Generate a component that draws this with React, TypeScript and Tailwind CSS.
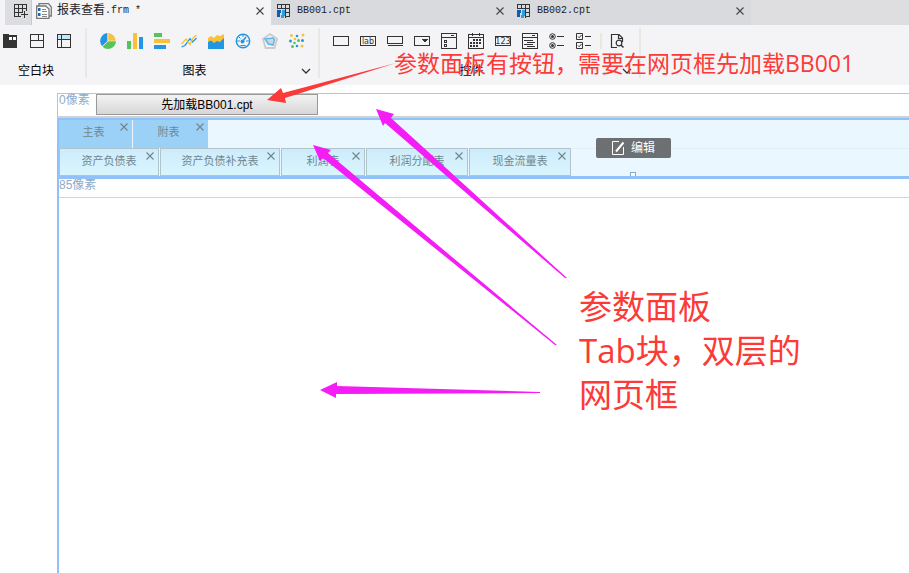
import type { ReactNode } from "react";

const CJK = "font-['Liberation_Sans','Noto_Sans_CJK_SC',sans-serif]";
const INK = "#333333";
const BLUE = "#2196e3";
const GREEN = "#54c558";
const YELLOW = "#f9c138";

function Icon({ children, crisp = true }: { children: ReactNode; crisp?: boolean }) {
  return (
    <svg
      viewBox="0 0 16 16"
      className="block size-4"
      fill="none"
      stroke={INK}
      shapeRendering={crisp ? "crispEdges" : "auto"}
      aria-hidden="true"
    >
      {children}
    </svg>
  );
}

const blockTools = [
  {
    name: "Tab块",
    icon: (
      <Icon>
        <path d="M0 3h5l1 1h8v13H0z" transform="translate(0 -2)" fill={INK} stroke="none" />
        <path d="M6 4h3v3H6zM10 4h3v3h-3z" fill="#fff" stroke="none" />
        <path d="M0 13h14v2H0z" fill={INK} stroke="none" />
      </Icon>
    ),
  },
  {
    name: "绝对画布块",
    icon: (
      <Icon>
        <path d="M.5 1.5h13v13H.5zM.5 7.5h13M8.500 1.500v6" />
      </Icon>
    ),
  },
  {
    name: "报表块",
    icon: (
      <Icon>
        <path d="M1 2h12v4H1z" fill="#bfe9f8" stroke="none" />
        <path d="M.5 1.5h13v13H.5zM.5 6.500h13M4.500 1.500v13" />
      </Icon>
    ),
  },
];

const chartTools = [
  {
    name: "饼图",
    icon: (
      <Icon crisp={false}>
        <g stroke="none">
          <path d="M8 8V0a8 8 0 0 1 7.500 9z" fill={YELLOW} />
          <path d="M8 8h8a8 8 0 0 1-13.500 5.700z" fill={GREEN} />
          <path d="M7.500 8L2.200 13.300A8 8 0 0 1 7.500.1z" fill={BLUE} />
        </g>
        <path d="M8 0v8h8M8 8l-6 6" stroke="#f4f4f7" strokeWidth=".6" />
      </Icon>
    ),
  },
  {
    name: "柱形图",
    icon: (
      <Icon>
        <path d="M0 8h4v8H0z" fill={GREEN} stroke="none" />
        <path d="M6 0h4v16H6z" fill={YELLOW} stroke="none" />
        <path d="M12 4h4v12h-4z" fill={BLUE} stroke="none" />
      </Icon>
    ),
  },
  {
    name: "条形图",
    icon: (
      <Icon>
        <path d="M0 0h8v4H0z" fill={GREEN} stroke="none" />
        <path d="M0 6h16v4H0z" fill={YELLOW} stroke="none" />
        <path d="M0 12h12v4H0z" fill={BLUE} stroke="none" />
      </Icon>
    ),
  },
  {
    name: "折线图",
    icon: (
      <Icon crisp={false}>
        <path d="M.5 14l3.500-1.500 5-7 2.500 3.500L15.500 5" stroke={BLUE} strokeWidth="1.300" />
        <path d="M.5 11L5 6l4 5.500 3-6.500 3.500-3" stroke={YELLOW} strokeWidth="1.300" />
      </Icon>
    ),
  },
  {
    name: "面积图",
    icon: (
      <Icon crisp={false}>
        <path d="M0 5l3-2 3 2 3-3 3 1 4-2v9H0z" fill={YELLOW} stroke="none" />
        <path d="M0 9l3-1.500L6 10l3-2 3 1 4-4v11H0z" fill={BLUE} stroke="none" />
      </Icon>
    ),
  },
  {
    name: "仪表盘",
    icon: (
      <Icon crisp={false}>
        <circle cx="8" cy="8" r="6.700" stroke={BLUE} strokeWidth="1.400" />
        <path d="M2 8h3M11 8h3M8 2v2M4 4l1.500 1.500M5.500 12.500h5" stroke={BLUE} />
        <circle cx="7.500" cy="8.500" r="2" fill={BLUE} stroke="none" />
        <path d="M7.500 8.500L11 4" stroke={BLUE} strokeWidth="1.500" />
      </Icon>
    ),
  },
  {
    name: "雷达图",
    icon: (
      <Icon crisp={false}>
        <path d="M8 1l7 5-2.500 9h-9L1 6z" stroke="#cccccc" strokeWidth="1.800" />
        <path d="M8 4.500l4 3-1.500 4h-5L4 7.500z" fill="#d2d4d6" stroke="none" />
        <path d="M3 6l8-1 1.500 2-1.500 5-4.500-1z" stroke="#5ab7ed" strokeWidth="1.500" />
      </Icon>
    ),
  },
  {
    name: "散点图",
    icon: (
      <Icon crisp={false}>
        <g stroke="none">
          <g fill={YELLOW}>
            <circle cx="2.500" cy="2.500" r="1.500" />
            <circle cx="14" cy="2" r="1.500" />
            <circle cx="6" cy="6" r="1.300" />
            <circle cx="13" cy="13" r="1.500" />
          </g>
          <g fill={BLUE}>
            <circle cx="8" cy="3" r="1.300" />
            <circle cx="1.500" cy="8" r="1.500" />
            <circle cx="13.500" cy="7.500" r="1.500" />
            <circle cx="8" cy="13" r="1.300" />
          </g>
          <g fill={GREEN}>
            <circle cx="9.500" cy="7.500" r="1.500" />
            <circle cx="5.500" cy="10" r="1.300" />
            <circle cx="3.500" cy="13.500" r="1.500" />
          </g>
        </g>
      </Icon>
    ),
  },
];

const widgetTools = [
  {
    name: "文本框",
    icon: (
      <Icon>
        <path d="M.5 3.500h15v9H.5z" />
      </Icon>
    ),
  },
  {
    name: "标签",
    icon: (
      <Icon>
        <path d="M.5 3.500h15v9H.5z" />
        <text x="8" y="11" textAnchor="middle" fontSize="8" fill={INK} stroke="none" className="font-['DejaVu_Sans',sans-serif]">
          lab
        </text>
      </Icon>
    ),
  },
  {
    name: "按钮",
    icon: (
      <Icon>
        <path d="M.5 3.500h15v7H.5zM1 12.500h15" />
      </Icon>
    ),
  },
  {
    name: "下拉框",
    icon: (
      <Icon>
        <path d="M.5 3.500h15v9H.5z" />
        <path d="M8 6h6l-3 4z" fill={INK} stroke="none" />
      </Icon>
    ),
  },
  {
    name: "下拉复选框",
    icon: (
      <Icon>
        <path d="M.5.5h15v15H.5zM.5 4.500h15M3.500 7.500h2v2h-2zM3.500 11.500h2v2h-2zM10 2.500h3" />
      </Icon>
    ),
  },
  {
    name: "日期",
    icon: (
      <Icon>
        <path d="M.5 1.500h15v14H.5zM.5 4.500h15M4.500 0v3M11.500 0v3" />
        <path d="M5 7h8M2 10h11M2 13h8" strokeWidth="2" strokeDasharray="2 1" />
      </Icon>
    ),
  },
  {
    name: "数字",
    icon: (
      <Icon>
        <path d="M1.500 3.500H.5v9h1M14.500 3.500h1v9h-1M1 3.500h14M1 12.500h14" />
        <text x="8" y="11" textAnchor="middle" fontSize="8" fill={INK} stroke="none" className="font-['DejaVu_Sans',sans-serif]">
          123
        </text>
      </Icon>
    ),
  },
  {
    name: "文本域",
    icon: (
      <Icon>
        <path d="M.5.5h15v15H.5zM.5 4.500h15M10 2.500h3M2 7.500h9M5 9.500h8M2 11.500h9M5 13.500h8" />
      </Icon>
    ),
  },
  {
    name: "单选按钮组",
    icon: (
      <Icon crisp={false}>
        <circle cx="3.500" cy="3.500" r="2.800" />
        <circle cx="3.500" cy="12.500" r="2.800" />
        <circle cx="3.500" cy="3.500" r="1.500" fill={INK} stroke="none" />
        <circle cx="3.500" cy="12.500" r="1.500" fill={INK} stroke="none" />
        <path d="M8 3.500h7M8 12.500h7" />
      </Icon>
    ),
  },
  {
    name: "复选按钮组",
    icon: (
      <Icon crisp={false}>
        <path d="M.5.5h6v6h-6zM.5 9.500h6v6h-6zM9 3.500h6M9 12.500h6M2 3.500l1.200 1.200L5.500 2M2 12.500l1.200 1.200L5.500 11" />
      </Icon>
    ),
  },
];

function ToolRow({ tools }: { tools: { name: string; icon: ReactNode }[] }) {
  return (
    <div className="flex gap-[11px]">
      {tools.map((tool) => (
        <button key={tool.name} type="button" aria-label={tool.name} className="block size-4">
          {tool.icon}
        </button>
      ))}
    </div>
  );
}

function GroupLabel({ text, more = false }: { text: string; more?: boolean }) {
  return (
    <div className="relative text-center text-xs leading-4 text-black">
      {text}
      {more && (
        <button type="button" aria-label={`更多${text}`} className="absolute top-1 right-[7px]">
          <svg width="10" height="8" viewBox="0 0 10 8" fill="none" stroke={INK} strokeWidth="1.300" className="block" aria-hidden="true">
            <path d="M1 2l4 4 4-4" />
          </svg>
        </button>
      )}
    </div>
  );
}

function Cross({ color }: { color: string }) {
  return (
    <svg width="8" height="8" viewBox="0 0 8 8" fill="none" stroke={color} strokeWidth="1.100" className="block" aria-hidden="true">
      <path d="M.5.5l7 7M7.500.5l-7 7" />
    </svg>
  );
}

function FormFileIcon() {
  return (
    <svg width="16" height="16" viewBox="0 0 16 16" fill="none" stroke="#777" className="block shrink-0" aria-hidden="true">
      <path d="M3 3V.7h9.500L15.300 4v9H13" strokeWidth="1.300" />
      <path d="M.7 3h9L13 6v9.300H.7z" fill="#fff" strokeWidth="1.300" />
      <path d="M2 5h2.500v3H2zM2 10h2.500v3H2z" fill="#1769b5" stroke="none" />
      <path d="M6 6.500h4M6 8.500h5M6 11.500h5M6 13.500h5" stroke="#888" />
    </svg>
  );
}

function ReportFileIcon() {
  return (
    <svg width="14" height="14" viewBox="0 0 14 14" fill="none" stroke={INK} className="block shrink-0" shapeRendering="crispEdges" aria-hidden="true">
      <path d="M.5 5V.5h12v12H8M.5 4.500h12M4.500.5v4M8.500.5v13M8 8.500h5" />
      <path d="M0 6h4v3H3v4H0z" fill="#0f5dad" stroke="none" />
      <path d="M5 6h3v6H7v2H4v-3h1z" fill="#2a9fe2" stroke="none" />
    </svg>
  );
}

function FileTab({ name, ext, active = false, icon }: { name: string; ext: string; active?: boolean; icon: ReactNode }) {
  return (
    <div
      className={
        active
          ? "flex h-full w-[239px] shrink-0 items-center bg-[#f4f4f7] pr-[7px] pb-1 pl-1 text-[#222]"
          : "flex h-full w-60 shrink-0 items-center bg-[#d9dade] pr-[7px] pb-1 pl-1.5 text-[#222]"
      }
    >
      <button type="button" className={active ? "flex flex-1 items-center gap-[5px]" : "flex flex-1 items-center gap-1.5"}>
        {icon}
        <span className="flex items-center font-['Liberation_Mono','Noto_Sans_CJK_SC',monospace] text-[10px] leading-4 whitespace-pre">
          {active && <span className="text-xs leading-4">{name}</span>}
          <span>{active ? ext : name + ext}</span>
        </span>
      </button>
      <button type="button" aria-label={`关闭${name}`}>
        <Cross color="#444" />
      </button>
    </div>
  );
}

function PageTab({ label, width, lower = false }: { label: string; width: string; lower?: boolean }) {
  return (
    <div
      className={`relative flex h-7 items-center justify-center text-[11px] leading-4 text-[#6f8791] ${width} ${
        lower ? "border border-[#b0c4cb] bg-linear-to-b from-[#cdebfa] to-[#d9f6fe]" : "bg-[#9bd1f6]"
      }`}
    >
      <button type="button" className={lower ? "pb-0.5" : "pr-1 pb-1"}>
        {label}
      </button>
      <button type="button" aria-label={`关闭${label}`} className="absolute top-[3px] right-1">
        <Cross color="#71848d" />
      </button>
    </div>
  );
}

const sheets = [
  { label: "资产负债表", width: "w-[100px]" },
  { label: "资产负债补充表", width: "w-[120px]" },
  { label: "利润表", width: "w-[84px]" },
  { label: "利润分配表", width: "w-[102px]" },
  { label: "现金流量表", width: "w-[102px]" },
];

export default function App() {
  return (
    <div className={`relative flex min-h-screen flex-col overflow-hidden bg-white ${CJK}`}>
      <header>
        <nav className="flex h-[25px] bg-[#dedee0]" aria-label="文件">
          <div className="w-[5px] shrink-0 bg-[#f4f4f7]" />
          <button
            type="button"
            aria-label="新建"
            className="flex w-[27px] shrink-0 items-center justify-center border-r border-[#c8c9cc] bg-[#dcdde0] pb-1 pl-1.5"
          >
            <svg width="14" height="14" viewBox="0 0 14 14" fill="none" stroke={INK} shapeRendering="crispEdges" aria-hidden="true">
              <path d="M7 12.500H.5V.5h12V7M.5 4.500h12M.5 8.500H8M4.500.5v12M8.500.5v8M10.500 7v7M7 10.500h7" />
            </svg>
          </button>
          <FileTab active name="报表查看" ext=".frm *" icon={<FormFileIcon />} />
          <FileTab name="BB001" ext=".cpt" icon={<ReportFileIcon />} />
          <FileTab name="BB002" ext=".cpt" icon={<ReportFileIcon />} />
        </nav>

        <div className="flex h-[60px] bg-[#f4f4f7] pt-[3px] pb-[7px]">
          <section className="flex w-[87px] flex-col gap-3.5 border-r-2 border-[#e8e8e4] pt-[5px] pl-[3px]">
            <ToolRow tools={blockTools} />
            <div className="pr-4">
              <GroupLabel text="空白块" />
            </div>
          </section>
          <section className="flex w-[233px] flex-col gap-3.5 border-r-2 border-[#e8e8e4] pt-[5px]">
            <div className="pl-[13px]">
              <ToolRow tools={chartTools} />
            </div>
            <div className="-ml-4">
              <GroupLabel text="图表" more />
            </div>
          </section>
          <section className="flex w-[321px] flex-col gap-3.5 border-r-2 border-[#e8e8e4] pt-[5px]">
            <div className="flex pl-[13px]">
              <ToolRow tools={widgetTools} />
              <div className="ml-2 h-4 w-0.5 bg-[#e8e8df]" />
              <button type="button" aria-label="查询" className="ml-2">
                <Icon crisp={false}>
                  <path d="M7 14.500H1.500V1.500H9L12.500 5v4M8.500 1.500v4h4" strokeWidth="1.200" />
                  <circle cx="9" cy="10" r="2.800" strokeWidth="1.200" />
                  <path d="M11 12l2.500 2.500" strokeWidth="1.500" />
                </Icon>
              </button>
            </div>
            <div className="-ml-4">
              <GroupLabel text="控件" more />
            </div>
          </section>
        </div>
      </header>

      <main className="mt-2 ml-[57px] flex grow flex-col text-xs">
        <section className="flex h-[25px] border-t border-b-2 border-l border-[#c3c3c3] border-b-[#ced2d6]">
          <span className="w-[38px] pl-px leading-3 text-[#8faac7]">0像素</span>
          <button
            type="button"
            className="h-[21px] w-[222px] border border-[#999] bg-linear-to-b from-[#f3f3f3] to-[#d6d6d6] text-xs leading-4 text-black"
          >
            先加载BB001.cpt
          </button>
        </section>

        <div className="flex grow flex-col border-l-2 border-[#90c1f9]">
          <section className="relative border-t-2 border-b-[3px] border-[#90c1f9] bg-[#eaf7fe]">
            <div className="flex h-7 gap-px">
              <PageTab label="主表" width="w-[73px]" />
              <PageTab label="附表" width="w-[75px]" />
            </div>
            <div className="flex gap-px">
              {sheets.map((sheet) => (
                <PageTab key={sheet.label} {...sheet} lower />
              ))}
              <div className="grow border-t border-[#e2f0f6]" />
            </div>
            <button
              type="button"
              className="absolute top-[18px] left-[537px] flex h-5 w-[75px] items-center justify-center gap-1.5 rounded-xs bg-[#6c7073] text-xs leading-4 text-white"
            >
              <svg width="13" height="14" viewBox="0 0 13 14" fill="none" stroke="#fff" aria-hidden="true">
                <path d="M7 .5H.5v13h11V6" />
                <path d="M4 10.500L11.500 1.500" strokeWidth="2" />
              </svg>
              编辑
            </button>
            <span className="absolute bottom-0 left-[571px] h-1 w-1.5 border border-b-0 border-[#88aaca] bg-white" />
          </section>
          <div className="h-[19px] border-b border-[#d5d5d5] leading-3 text-[#8faac7]">85像素</div>
        </div>
      </main>

      <p className="absolute top-[49px] left-[394px] font-['Open_Sans','Noto_Sans_CJK_SC',sans-serif] text-[23px] leading-7 whitespace-nowrap text-[#fc3a38]">
        参数面板有按钮，需要在网页框先加载BB001
      </p>
      <p className="absolute top-[285px] left-[579px] font-['Open_Sans','Noto_Sans_CJK_SC',sans-serif] text-[33px] leading-[44px] whitespace-nowrap text-[#fc3a38]">
        参数面板
        <br />
        Tab块，双层的
        <br />
        网页框
      </p>

      <svg width="909" height="573" viewBox="0 0 909 573" className="pointer-events-none absolute top-0 left-0" aria-hidden="true">
        <path d="M267 100L281 88L283 93L396 63L285 98L286 103Z" fill="#fc3a38" />
        <g fill="#f41df6">
          <path d="M376 109L394 114L391 118L567 278L565 278L385 123L383 126Z" />
          <path d="M313 145L331 150L328 153L557 345L555 345L323 158L320 161Z" />
          <path d="M320 390L337 382L337 386L540 392L540 393L336 394L336 398Z" />
        </g>
      </svg>
    </div>
  );
}
